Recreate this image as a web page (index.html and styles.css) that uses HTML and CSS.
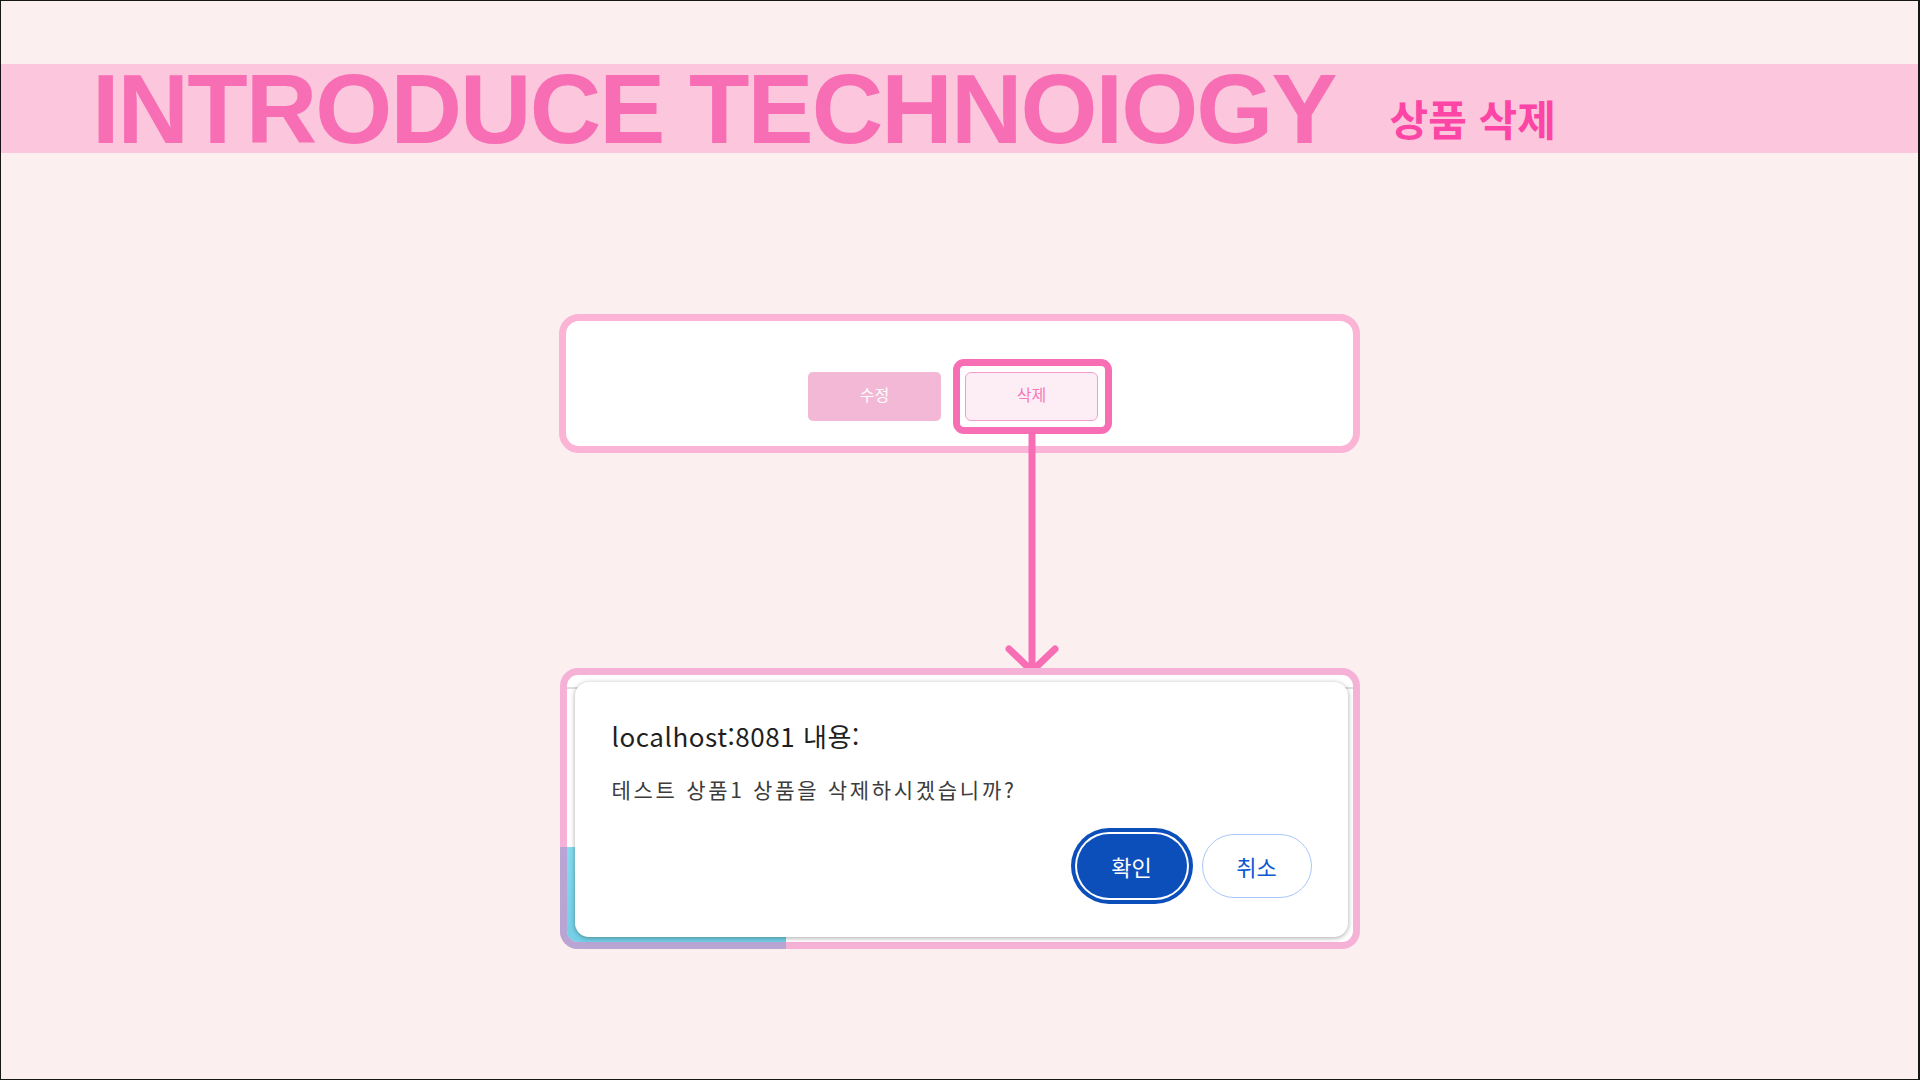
FILE: index.html
```html
<!DOCTYPE html>
<html lang="ko">
<head>
<meta charset="utf-8">
<title>INTRODUCE TECHNOIOGY - 상품 삭제</title>
<link rel="stylesheet" href="styles.css">
</head>
<body>
<div class="page">
  <header class="band">
    <h1 class="title">INTRODUCE TECHNOIOGY</h1>
    <span class="subtitle">상품 삭제</span>
  </header>

  <section class="card">
    <div class="btn-row">
      <button class="btn-edit">수정</button>
      <div class="highlight">
        <button class="btn-delete">삭제</button>
      </div>
    </div>
  </section>

  <svg class="arrow" width="64" height="246" viewBox="0 0 64 246">
    <line x1="33" y1="0" x2="33" y2="238" stroke="#f76eb4" stroke-width="7" stroke-linecap="round"/>
    <polyline points="10,218 33,240 56,218" fill="none" stroke="#f76eb4" stroke-width="7" stroke-linecap="round" stroke-linejoin="round"/>
  </svg>

  <section class="frame">
    <div class="rule"></div>
    <div class="patch"></div>
    <div class="patch-border"></div>
    <div class="dialog">
      <div class="dlg-title">localhost:8081 내용:</div>
      <div class="dlg-msg">테스트 상품1 상품을 삭제하시겠습니까?</div>
      <div class="dlg-actions">
        <button class="btn-ok">확인</button>
        <button class="btn-cancel">취소</button>
      </div>
    </div>
  </section>
</div>
</body>
</html>
```
FILE: styles.css
```css
html, body {
  margin: 0;
  padding: 0;
}
body {
  background: #fcefef;
  font-family: "Noto Sans CJK KR", "Noto Sans", sans-serif;
}
.page {
  position: relative;
  width: 1920px;
  height: 1080px;
  box-sizing: border-box;
  border: 1px solid #161616;
  border-right-width: 2px;
  background: #fcefef;
  overflow: hidden;
}
.band {
  margin-top: 63px;
  height: 89px;
  background: #fcc6dc;
  display: flex;
  align-items: baseline;
  padding-left: 91px;
}
.title {
  margin: 0;
  font-family: "Liberation Sans", Arial, sans-serif;
  font-weight: 700;
  font-size: 99px;
  line-height: 90px;
  letter-spacing: -1.9px;
  color: #f76eb4;
  white-space: nowrap;
}
.subtitle {
  margin-left: 54px;
  font-family: "Noto Sans CJK KR", sans-serif;
  font-weight: 700;
  font-size: 42px;
  color: #fd45a6;
  position: relative;
  top: -7px;
}
.card {
  width: 801px;
  box-sizing: border-box;
  margin: 161px auto 0;
  padding: 38px 0 12px;
  background: #fff;
  border: 7px solid #fbb3d6;
  border-radius: 20px;
}
.btn-row {
  display: flex;
  justify-content: center;
  align-items: center;
  gap: 12px;
  padding-left: 1px;
}
.btn-edit,
.btn-delete {
  width: 133px;
  height: 49px;
  font-family: "Noto Sans CJK KR", sans-serif;
  font-size: 16px;
  line-height: 1;
  padding: 0 0 5px;
  cursor: pointer;
}
.btn-edit {
  background: #f2b8d6;
  color: #fff;
  border: none;
  border-radius: 5px;
}
.highlight {
  border: 7px solid #f76eb4;
  border-radius: 11px;
  padding: 6px 7px 6px 5px;
  background: #fff;
  display: flex;
}
.btn-delete {
  background: #fdeef6;
  color: #f57ab8;
  border: 1px solid #f79ccb;
  border-radius: 6px;
}
.arrow {
  position: absolute;
  left: 998px;
  top: 430px;
}
.frame {
  position: relative;
  width: 800px;
  height: 281px;
  box-sizing: border-box;
  margin: 215px auto 0;
  border: 7px solid #f6b1d7;
  border-radius: 18px;
  background: #fff;
  padding: 7px 5px 5px 8px;
}
.rule {
  position: absolute;
  left: 0;
  right: 0;
  top: 12px;
  height: 2px;
  background: #dedede;
}
.patch {
  position: absolute;
  left: 0;
  top: 172px;
  width: 219px;
  bottom: 0;
  background: linear-gradient(#84dbee, #74d0e6);
  border-bottom-left-radius: 11px;
}
.patch-border {
  position: absolute;
  left: -7px;
  top: 172px;
  width: 226px;
  bottom: -7px;
  box-sizing: border-box;
  border-left: 7px solid #b9a5d3;
  border-bottom: 7px solid #b9a5d3;
  border-bottom-left-radius: 18px;
}
.dialog {
  position: relative;
  z-index: 1;
  height: 255px;
  box-sizing: border-box;
  background: #fff;
  border-radius: 14px;
  box-shadow: 0 1px 5px rgba(0, 0, 0, 0.35);
  padding: 39px 36px 0 37px;
  color: #1f1f1f;
}
.dlg-title {
  font-size: 26px;
  line-height: 30px;
  color: #1f1f1f;
  letter-spacing: 0.55px;
}
.dlg-msg {
  margin-top: 24px;
  font-size: 21px;
  line-height: 28px;
  color: #3c3c3c;
  letter-spacing: 2.7px;
}
.dlg-actions {
  margin-top: 31px;
  display: flex;
  justify-content: flex-end;
  gap: 15px;
}
.btn-ok,
.btn-cancel {
  width: 110px;
  height: 64px;
  border-radius: 32px;
  font-family: "Noto Sans CJK KR", sans-serif;
  font-size: 22px;
  padding: 0;
}
.btn-ok {
  background: #0c4fbb;
  color: #fff;
  border: none;
  box-shadow: 0 0 0 2px #fff, 0 0 0 6px #0c4fbb;
}
.btn-cancel {
  background: #fff;
  color: #0b57d0;
  border: 1.5px solid #a8c7fa;
}
```
